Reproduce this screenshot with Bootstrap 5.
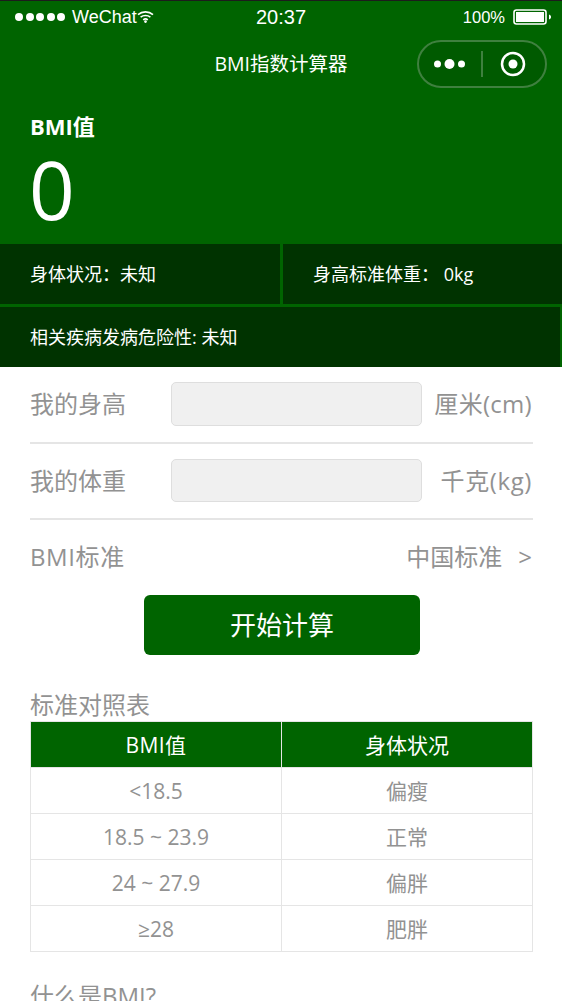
<!DOCTYPE html>
<html lang="zh">
<head>
    <meta charset="UTF-8" />
    <meta name="viewport" content="width=device-width, initial-scale=1.0" />
    <title>BMI指数计算器</title>
    <link href="https://cdn.jsdelivr.net/npm/bootstrap@5.3.0/dist/css/bootstrap.min.css" rel="stylesheet" />
    <style>
        html, body { height: 1001px; overflow: hidden; }
        body { font-family: "Open Sans", "Noto Sans CJK SC", sans-serif; color: #929292; background: #fff; }
        .top-area { background: #006400; border-top: 1px solid #1c1c1c; color: #fff; height: 244px; }
        .status-line { height: 31px; padding: 0 10px 0 15px; font: 18px/30px "Liberation Sans", sans-serif; }
        .status-dot { width: 8px; height: 8px; border-radius: 50%; background: #fff; margin-right: 2.6px; }
        .status-time { font-size: 20px; position: absolute; left: 0; right: 0; text-align: center; }
        .status-batt { font-size: 16.500px; }
        .title-line { height: 64px; position: relative; }
        .title-text { font-size: 19.500px; line-height: 64px; text-align: center; }
        .capsule { position: absolute; top: 8px; right: 15px; width: 130px; height: 48px; border: 2px solid #3f803f; border-radius: 24px; background: #005a00; }
        .capsule-dots { margin-left: 15px; }
        .capsule-line { width: 2px; height: 26px; background: #3f803f; margin-left: 15px; margin-right: 17px; }
        .bmi-label { font-size: 22px; font-weight: 700; padding: 15px 30px 0; line-height: 30px; }
        .bmi-num { font-size: 80px; line-height: 80px; padding: 8px 30px 0 29px; }
        .info-area { background: #006400; color: #fff; font-size: 18px; height: 123px; }
        .info-cell { background: #003300; height: 60px; line-height: 60px; padding-left: 30px; }
        .info-left { width: 280px; }
        .info-right { margin-left: 3px; flex: 1; padding-left: 30px; }
        .info-wide { margin-top: 3px; margin-right: 2px; }
        .form-area { padding: 15px 29px 0 30px; font-size: 24px; line-height: 44px; }
        .form-name { width: 141px; }
        .form-box { width: 251px; height: 44px; background: #f0f0f0; border: 1px solid #dedede; border-radius: 5px; }
        .form-box-low { height: 43px; align-self: flex-start; }
        .form-unit { margin-right: 1px; letter-spacing: .3px; }
        .form-unit-kg { letter-spacing: .6px; }
        .form-line { height: 2px; background: #e5e5e5; margin-top: 16px; }
        .form-line-first { margin-bottom: 15px; }
        .form-line-second { margin-top: 15px; }
        .form-pick { margin-top: 15px; }
        .form-pick-name { letter-spacing: .6px; }
        .form-arrow { margin-left: 16px; margin-right: 1px; }
        .calc-wrap { padding-left: 2px; margin-top: 16px; }
        .calc-btn { width: 276px; height: 60px; background: #006400; border: 0; color: #fff; font-size: 26px; border-radius: 6px; padding: 0; }
        .calc-btn:hover { background: #006400; color: #fff; }
        .section-name { font-size: 24px; line-height: 32px; padding-left: 30px; }
        .section-table { margin-top: 34px; }
        .section-next { margin-top: 28px; }
        .bmi-table { width: 503px; margin: 0 0 0 30px; font-size: 21px; table-layout: fixed; border-color: #e5e5e5; --bs-table-color: #929292; }
        .bmi-table td, .bmi-table th { height: 46px; padding: 2px 0 0; line-height: 43px; text-align: center; font-weight: 400; color: #929292; }
        .bmi-table th { background: #006400; color: #fff; }
        .head-bmi { letter-spacing: .4px; }
    </style>
</head>
<body>
<div class="top-area">
    <div class="status-line d-flex align-items-center position-relative">
        <span class="status-dot"></span><span class="status-dot"></span><span class="status-dot"></span><span class="status-dot"></span><span class="status-dot"></span>
        <span class="ms-1">WeChat</span>
        <svg width="17" height="13" viewBox="0 0 17 13" fill="none" stroke="#fff" stroke-width="1.6">
            <path d="M1 4.6C5.200 1 11.800 1 16 4.600" />
            <path d="M3.6 7.2C6.300 5 10.700 5 13.400 7.200" />
            <path d="M6.2 9.8C7.500 8.800 9.500 8.800 10.800 9.800" />
            <circle cx="8.500" cy="11.600" r=".6" fill="#fff" />
        </svg>
        <span class="status-time">20:37</span>
        <span class="status-batt ms-auto me-2">100%</span>
        <svg width="39" height="16" viewBox="0 0 39 16">
            <rect x="1" y="1" width="32" height="14" rx="2.500" fill="none" stroke="#fff" stroke-width="1.600" />
            <rect x="3" y="3" width="28" height="10" fill="#fff" />
            <path d="M36 5.500c1.400.4 2 1.200 2 2.500s-.6 2.100-2 2.500z" fill="#fff" />
        </svg>
    </div>
    <div class="title-line">
        <div class="title-text">BMI指数计算器</div>
        <div class="capsule d-flex align-items-center">
            <svg class="capsule-dots" width="32" height="12" viewBox="0 0 32 12" fill="#fff">
                <circle cx="3.500" cy="6" r="3.500" />
                <circle cx="15.500" cy="6" r="5" />
                <circle cx="27.500" cy="6" r="3.500" />
            </svg>
            <span class="capsule-line"></span>
            <svg width="26" height="26" viewBox="0 0 26 26">
                <circle cx="13" cy="13" r="11" fill="none" stroke="#fff" stroke-width="2.500" />
                <circle cx="13" cy="13" r="4.500" fill="#fff" />
            </svg>
        </div>
    </div>
    <div class="bmi-label">BMI值</div>
    <div class="bmi-num">0</div>
</div>

<div class="info-area">
    <div class="d-flex">
        <div class="info-cell info-left">身体状况：未知</div>
        <div class="info-cell info-right">身高标准体重： 0kg</div>
    </div>
    <div class="info-cell info-wide">相关疾病发病危险性: 未知</div>
</div>

<div class="form-area">
    <div class="d-flex align-items-center">
        <span class="form-name">我的身高</span>
        <input class="form-box" type="text" aria-label="我的身高" />
        <span class="form-unit ms-auto">厘米(cm)</span>
    </div>
    <div class="form-line form-line-first"></div>
    <div class="d-flex align-items-center">
        <span class="form-name">我的体重</span>
        <input class="form-box form-box-low" type="text" aria-label="我的体重" />
        <span class="form-unit form-unit-kg ms-auto">千克(kg)</span>
    </div>
    <div class="form-line form-line-second"></div>
    <div class="form-pick d-flex align-items-center justify-content-between">
        <span class="form-pick-name">BMI标准</span>
        <span>中国标准<span class="form-arrow">&gt;</span></span>
    </div>
</div>

<div class="calc-wrap text-center">
    <button class="btn calc-btn" type="button">开始计算</button>
</div>

<div class="section-name section-table">标准对照表</div>
<table class="table table-bordered bmi-table">
    <thead>
        <tr><th class="head-bmi">BMI值</th><th>身体状况</th></tr>
    </thead>
    <tbody>
        <tr><td>&lt;18.5</td><td>偏瘦</td></tr>
        <tr><td>18.5 ~ 23.9</td><td>正常</td></tr>
        <tr><td>24 ~ 27.9</td><td>偏胖</td></tr>
        <tr><td>≥28</td><td>肥胖</td></tr>
    </tbody>
</table>

<div class="section-name section-next">什么是BMI?</div>

<script src="https://cdn.jsdelivr.net/npm/bootstrap@5.3.0/dist/js/bootstrap.bundle.min.js"></script>
</body>
</html>
